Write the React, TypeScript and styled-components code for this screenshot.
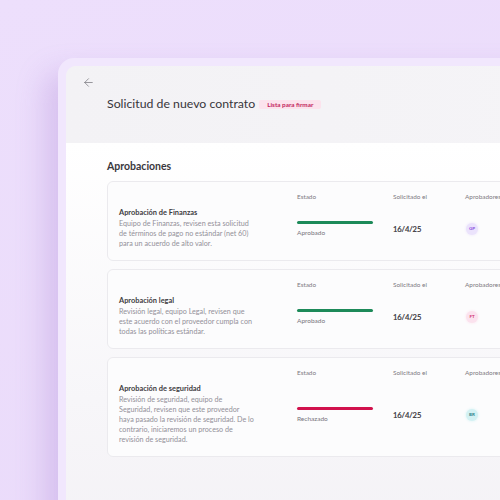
import React from "react";
import styled, { createGlobalStyle } from "styled-components";
import { ArrowLeft } from "lucide-react";

const GlobalStyle = createGlobalStyle`
  html, body {
    margin: 0;
    padding: 0;
  }
  body {
    font-family: Lato, "Liberation Sans", sans-serif;
    -webkit-font-smoothing: antialiased;
  }
`;

type Tone = "purple" | "pink" | "teal";

interface Approval {
  title: string;
  // lines kept as in the design, so the wrap matches
  description: string[];
  status: "approved" | "rejected";
  date: string;
  approver: string;
  tone: Tone;
}

const approvals: Approval[] = [
  {
    title: "Aprobación de Finanzas",
    description: [
      "Equipo de Finanzas, revisen esta solicitud",
      "de términos de pago no estándar (net 60)",
      "para un acuerdo de alto valor.",
    ],
    status: "approved",
    date: "16/4/25",
    approver: "GP",
    tone: "purple",
  },
  {
    title: "Aprobación legal",
    description: [
      "Revisión legal, equipo Legal, revisen que",
      "este acuerdo con el proveedor cumpla con",
      "todas las políticas estándar.",
    ],
    status: "approved",
    date: "16/4/25",
    approver: "FT",
    tone: "pink",
  },
  {
    title: "Aprobación de seguridad",
    description: [
      "Revisión de seguridad, equipo de",
      "Seguridad, revisen que este proveedor",
      "haya pasado la revisión de seguridad. De lo",
      "contrario, iniciaremos un proceso de",
      "revisión de seguridad.",
    ],
    status: "rejected",
    date: "16/4/25",
    approver: "BR",
    tone: "teal",
  },
];

const toneColors: Record<Tone, { bg: string; fg: string }> = {
  purple: { bg: "#ebe3fc", fg: "#8a4fe0" },
  pink: { bg: "#fbe2ee", fg: "#d0336f" },
  teal: { bg: "#d3f1f3", fg: "#2b7f88" },
};

const Stage = styled.div`
  width: 500px;
  height: 500px;
  overflow: hidden;
  box-sizing: border-box;
  padding: 58px 0 0 58px;
  background: linear-gradient(160deg, #eddffc 0%, #eadbfa 100%);
`;

const Frame = styled.div`
  width: 520px;
  height: 520px;
  box-sizing: border-box;
  padding: 8px;
  border-radius: 16px;
  background: #f1e7fd;
  box-shadow: -14px 14px 28px rgba(160, 120, 210, 0.28);
`;

const Panel = styled.div`
  height: 100%;
  border-radius: 10px 10px 0 0;
  overflow: hidden;
  display: flex;
  flex-direction: column;
  background: #f4f2f6;
`;

const Header = styled.header`
  height: 77px;
  box-sizing: border-box;
  padding: 10px 16px;
  background: linear-gradient(90deg, #f3f2f5 0%, #f5f4f7 100%);
  display: flex;
  flex-direction: column;
  gap: 8px;
`;

const BackButton = styled.button`
  width: 14px;
  height: 12px;
  padding: 0;
  border: none;
  background: none;
  color: #7b7980;
  display: flex;
  align-items: center;
  cursor: pointer;
`;

const TitleRow = styled.div`
  margin-left: 25px;
  display: flex;
  align-items: center;
  gap: 4px;
`;

const PageTitle = styled.h1`
  margin: 0;
  font-size: 12.3px;
  font-weight: 400;
  line-height: 16px;
  color: #38363b;
`;

const Badge = styled.span`
  height: 9px;
  padding: 0 8px;
  border-radius: 2px;
  background: #fce3ed;
  color: #c2265e;
  font-size: 6.4px;
  font-weight: 700;
  line-height: 9px;
`;

const Content = styled.main`
  flex: 1;
  padding: 16px 0 0 41px;
  background: linear-gradient(180deg, #ffffff 0%, #f7f6f9 60%, #f3f1f5 100%);
`;

const SectionTitle = styled.h2`
  margin: 0 0 8px;
  font-size: 10.5px;
  font-weight: 700;
  line-height: 14px;
  color: #3a383d;
`;

const CardList = styled.div`
  display: flex;
  flex-direction: column;
  gap: 8px;
`;

const Card = styled.section`
  width: 430px;
  box-sizing: border-box;
  padding: 11px 0 8px;
  display: grid;
  grid-template-columns: 189px 96px 72px 1fr;
  border: 1px solid #ebeaee;
  border-radius: 6px;
  background: #fcfcfd;
`;

const Cell = styled.div`
  display: flex;
  flex-direction: column;
`;

const ColumnLabel = styled.div`
  height: 8px;
  margin-bottom: 4px;
  font-size: 6.4px;
  line-height: 8px;
  color: #7d7a82;
  white-space: nowrap;
`;

const CellBody = styled.div<{ $pad?: boolean }>`
  flex: 1;
  display: flex;
  flex-direction: column;
  justify-content: center;
  padding: ${({ $pad }) => ($pad ? "3px 0 3px 11px" : "0")};
`;

const CardTitle = styled.h3`
  margin: 0 0 1px;
  font-size: 7.4px;
  font-weight: 700;
  line-height: 10px;
  color: #3d3b41;
`;

const Description = styled.p`
  margin: 0;
  font-size: 7.2px;
  line-height: 10px;
  color: #939099;
  white-space: nowrap;
`;

const DescriptionLine = styled.span`
  display: block;
`;

const StatusBar = styled.div<{ $status: "approved" | "rejected" }>`
  width: 76px;
  height: 3px;
  border-radius: 2px;
  background: ${({ $status }) => ($status === "approved" ? "#1d8a59" : "#d1124d")};
`;

const StatusLabel = styled.div`
  margin-top: 5px;
  font-size: 6.5px;
  line-height: 8px;
  color: #77747c;
`;

const DateText = styled.div`
  font-size: 7.6px;
  font-weight: 400;
  line-height: 10px;
  letter-spacing: -0.1px;
  color: #2f2d33;
  -webkit-text-stroke: 0.2px #2f2d33;
`;

const Avatar = styled.div<{ $tone: Tone }>`
  width: 12px;
  height: 12px;
  margin-left: 1px;
  border-radius: 50%;
  display: flex;
  align-items: center;
  justify-content: center;
  background: ${({ $tone }) => toneColors[$tone].bg};
  color: ${({ $tone }) => toneColors[$tone].fg};
  font-size: 4.5px;
  font-weight: 700;
  box-shadow: 0 0 3px ${({ $tone }) => toneColors[$tone].bg};
`;

const ApprovalCard: React.FC<{ item: Approval }> = ({ item }) => (
  <Card>
    <Cell>
      <ColumnLabel />
      <CellBody $pad>
        <CardTitle>{item.title}</CardTitle>
        <Description>
          {item.description.map((line) => (
            <DescriptionLine key={line}>{line}</DescriptionLine>
          ))}
        </Description>
      </CellBody>
    </Cell>
    <Cell>
      <ColumnLabel>Estado</ColumnLabel>
      <CellBody>
        <StatusBar $status={item.status} />
        <StatusLabel>
          {item.status === "approved" ? "Aprobado" : "Rechazado"}
        </StatusLabel>
      </CellBody>
    </Cell>
    <Cell>
      <ColumnLabel>Solicitado el</ColumnLabel>
      <CellBody>
        <DateText>{item.date}</DateText>
      </CellBody>
    </Cell>
    <Cell>
      <ColumnLabel>Aprobadores</ColumnLabel>
      <CellBody>
        <Avatar $tone={item.tone}>{item.approver}</Avatar>
      </CellBody>
    </Cell>
  </Card>
);

const App: React.FC = () => {
  return (
    <>
      <GlobalStyle />
      <Stage>
        <Frame>
          <Panel>
            <Header>
              <BackButton aria-label="Volver">
                <ArrowLeft size={13} strokeWidth={1.4} />
              </BackButton>
              <TitleRow>
                <PageTitle>Solicitud de nuevo contrato</PageTitle>
                <Badge>Lista para firmar</Badge>
              </TitleRow>
            </Header>
            <Content>
              <SectionTitle>Aprobaciones</SectionTitle>
              <CardList>
                {approvals.map((item) => (
                  <ApprovalCard key={item.title} item={item} />
                ))}
              </CardList>
            </Content>
          </Panel>
        </Frame>
      </Stage>
    </>
  );
};

export default App;
